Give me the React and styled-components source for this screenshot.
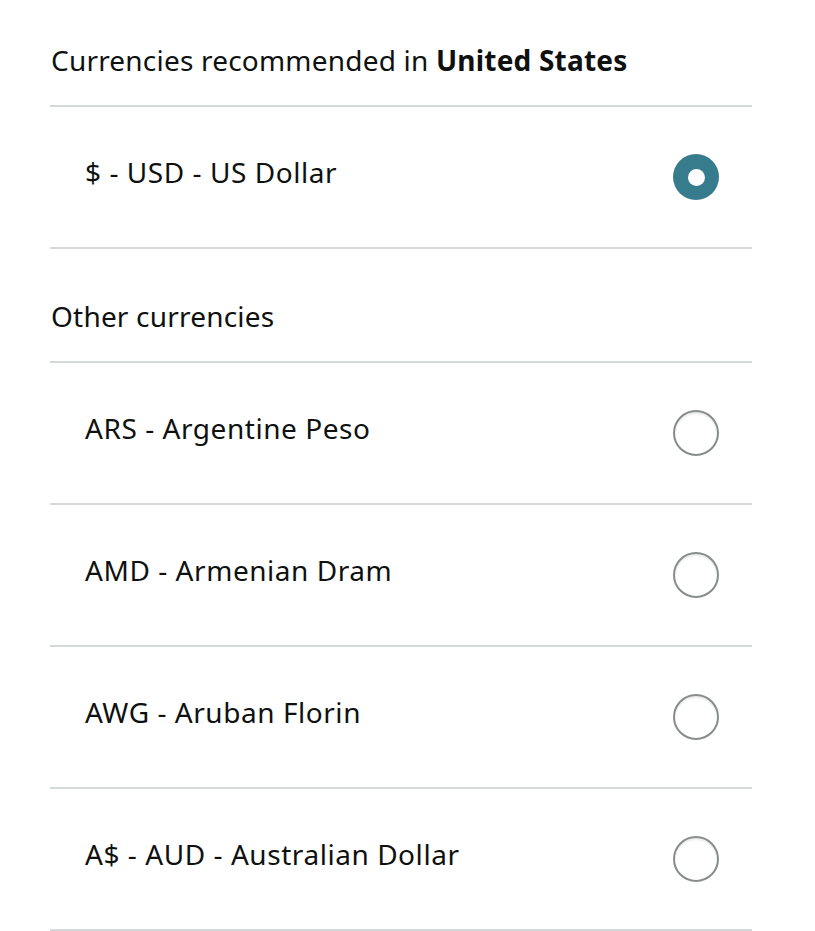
import React from "react";
import styled, { createGlobalStyle } from "styled-components";

const Global = createGlobalStyle`
  html, body { margin: 0; padding: 0; background: #fff; }
  body { font-family: "Noto Sans", "Open Sans", Arial, sans-serif; color: #0f1111; }
`;

const Page = styled.div`
  padding-left: 50px;
  width: 702px;
`;

const Heading = styled.div`
  padding: ${(p) => (p.$first ? "40px" : "47px")} 1px 25px;
  font-size: 28px;
  letter-spacing: 0.2px;
  line-height: 40px;
  border-bottom: 2px solid #d5d9d9;
  b { font-weight: 700; }
`;

const Row = styled.label`
  display: flex;
  align-items: center;
  justify-content: space-between;
  height: 140px;
  padding: 0 33px 0 35px;
  border-bottom: 2px solid #d5d9d9;
  font-size: 28px;
  letter-spacing: 0.55px;
  line-height: 40px;
  cursor: pointer;
`;

const Label = styled.span`
  margin-top: -10px;
`;

const Radio = styled.span`
  box-sizing: border-box;
  width: 46px;
  height: 46px;
  border-radius: 50%;
  display: flex;
  align-items: center;
  justify-content: center;
  background: ${(p) => (p.$checked ? "#377c8d" : "#fff")};
  border: ${(p) => (p.$checked ? "none" : "2px solid #888c8c")};
  box-shadow: ${(p) => (p.$checked ? "none" : "inset 0 2px 2px rgba(0,0,0,0.08)")};
  &::after {
    content: "";
    display: ${(p) => (p.$checked ? "block" : "none")};
    width: 17px;
    height: 17px;
    border-radius: 50%;
    background: #fff;
  }
`;

const recommended = [{ label: "$ - USD - US Dollar", checked: true }];
const others = [
  "ARS - Argentine Peso",
  "AMD - Armenian Dram",
  "AWG - Aruban Florin",
  "A$ - AUD - Australian Dollar",
];

export default function App() {
  return (
    <>
      <Global />
      <Page>
        <Heading $first>
          Currencies recommended in <b>United States</b>
        </Heading>
        {recommended.map((c) => (
          <Row key={c.label}>
            <Label>{c.label}</Label>
            <Radio $checked={c.checked} />
          </Row>
        ))}
        <Heading>Other currencies</Heading>
        {others.map((c) => (
          <Row key={c}>
            <Label>{c}</Label>
            <Radio />
          </Row>
        ))}
      </Page>
    </>
  );
}
